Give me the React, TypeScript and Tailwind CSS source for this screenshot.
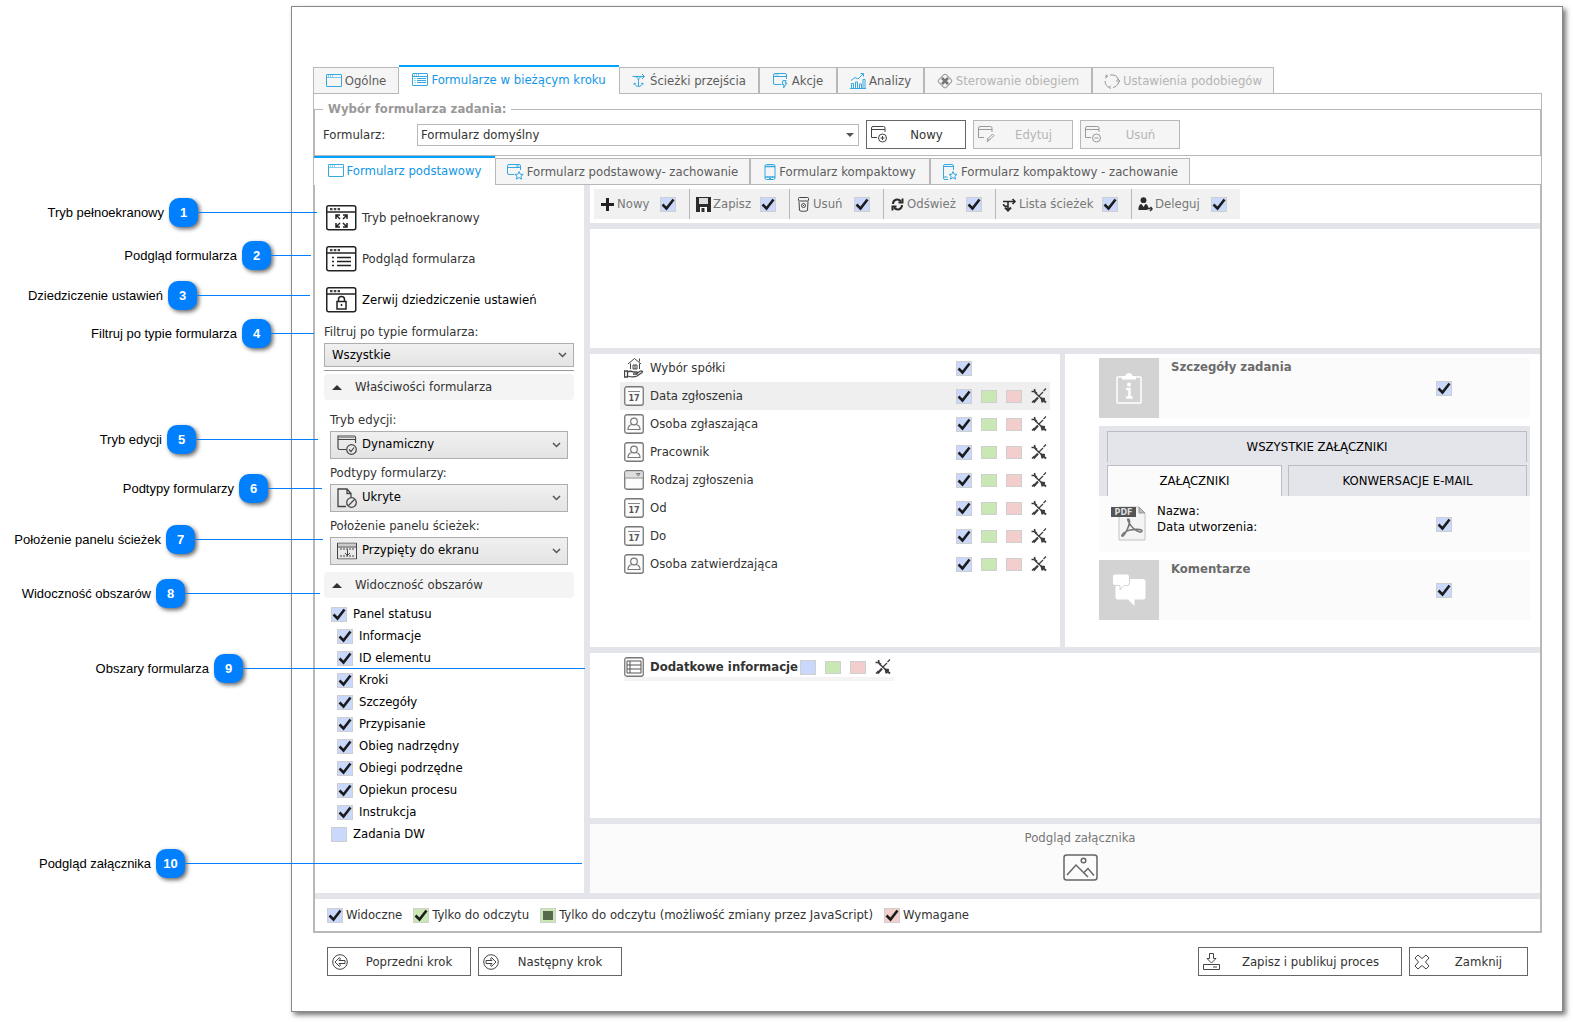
import type { ReactNode } from "react";

type IconProps = { className?: string };

interface TabItem {
  label: string;
  icon: ReactNode;
  width: string;
  active?: boolean;
  disabled?: boolean;
}

/* ---------- icons ---------- */

function WindowIcon({ className = "" }: IconProps) {
  return (
    <svg width="16" height="14" viewBox="0 0 16 14" fill="none" stroke="currentColor" className={className}>
      <rect x="0.5" y="0.5" width="15" height="12" rx="0.5" />
      <path d="M1 3.500h14" strokeOpacity="0.6" />
      <path d="M2 2h5" strokeDasharray="1 1" />
    </svg>
  );
}

function WindowListIcon() {
  return (
    <svg width="16" height="14" viewBox="0 0 16 14" fill="none" stroke="currentColor">
      <rect x="0.5" y="0.5" width="15" height="12" rx="0.5" />
      <path d="M0.5 3.5h15M5 5.500h9M5 7.500h9M5 9.500h9M2.5 5.500h1M2.5 7.500h1M2.5 9.500h1" />
      <path d="M2 2h5" strokeDasharray="1 1" />
    </svg>
  );
}

function PathsIcon() {
  return (
    <svg width="15" height="15" viewBox="0 0 15 15" fill="none" stroke="currentColor">
      <path d="M0.500 3.500h12M10 1l2.500 2.500L10 6M2 3.500c3 0 4.500 1.500 4.500 4V13M11 3.500c-3 0-4.500 1.500-4.500 4" />
      <path d="M2.500 10c0 2 2 3.500 4 3.500s4-1.500 4-3.500M1.500 11.500l1-1.500 1.500 1M11.500 11.500l-1-1.500-1.500 1" />
    </svg>
  );
}

function WindowBoltIcon() {
  return (
    <svg width="16" height="16" viewBox="0 0 16 16" fill="none" stroke="currentColor">
      <path d="M8 11.500H2A1.500 1.500 0 0 1 0.500 10V2A1.500 1.500 0 0 1 2 0.500h10A1.500 1.500 0 0 1 13.500 2v4M0.500 3.500h13" />
      <path d="M2.500 2h1M4.500 2h1" />
      <path d="M10 7.500h3l-1 2.500h2L10.500 15l.5-3.500H9z" />
    </svg>
  );
}

function ChartIcon() {
  return (
    <svg width="16" height="16" viewBox="0 0 16 16" fill="none" stroke="currentColor">
      <path d="M1.500 15v-4.500h2V15M5.500 15V9h2v6M9.500 15v-4h2v4M13 15V6.500h2V15M0 15.500h16M1 7.500l4-3 3 1.500 5-5M10.500 0.500h3v3" />
    </svg>
  );
}

function FlowControlIcon() {
  return (
    <svg width="16" height="16" viewBox="0 0 16 16" fill="none" stroke="currentColor">
      <rect x="2.700" y="2.700" width="10.600" height="10.600" rx="2" transform="rotate(45 8 8)" />
      <path d="M5 5l6 6M11 5l-6 6" stroke="#777" strokeWidth="2.600" />
    </svg>
  );
}

function CycleIcon() {
  return (
    <svg width="16" height="16" viewBox="0 0 16 16" fill="none" stroke="#999">
      <path d="M6 2h3a6 5 0 0 1 5 5M14.500 9.500C14 12 11.500 14 9 14.500M5.500 14.500C3 13.500 1 11.500 1 8M1.500 5.500L3.500 3" />
      <path d="M3.500 3L2 1.500M3.500 3L1 3.500M12 8h4M14 6l2 2-2 2.500M7 12.500l-2 2 2 1" />
    </svg>
  );
}

function WindowStarIcon() {
  return (
    <svg width="17" height="16" viewBox="0 0 17 16" fill="none" stroke="currentColor">
      <path d="M7 10.500H2A1.500 1.500 0 0 1 0.500 9V2A1.500 1.500 0 0 1 2 0.500h10A1.500 1.500 0 0 1 13.500 2v4M0.500 3.500h13M9 2h3" />
      <path d="M12 7.500l1.200 2.700 3 .2-2.300 1.800.8 3-2.700-1.600-2.700 1.600.8-3-2.300-1.800 3-.2z" />
    </svg>
  );
}

function PhoneIcon() {
  return (
    <svg width="12" height="16" viewBox="0 0 12 16" fill="none" stroke="currentColor">
      <rect x="1" y="0.500" width="10" height="15" rx="1.500" />
      <path d="M1 2.500h10M1 13h10" strokeWidth="1.400" />
      <path d="M5 14.500h2" />
    </svg>
  );
}

function PhoneStarIcon() {
  return (
    <svg width="16" height="16" viewBox="0 0 16 16" fill="none" stroke="currentColor">
      <path d="M6 15.500H3A1.500 1.500 0 0 1 1.500 14V2A1.500 1.500 0 0 1 3 0.500h7A1.500 1.500 0 0 1 11.500 2v4M1.500 2.500h10M1.500 13h4" />
      <path d="M11 7.500l1.100 2.700 2.900.2-2.200 1.800.8 3-2.600-1.600-2.600 1.600.8-3L7 10.400l2.900-.2z" />
    </svg>
  );
}

function WindowBadgeIcon({ kind }: { kind: "plus" | "edit" | "minus" }) {
  return (
    <svg width="17" height="17" viewBox="0 0 17 17" fill="none" stroke="currentColor">
      <path d="M6 11.500H0.500V2A1.500 1.500 0 0 1 2 0.500h10.500A1.500 1.500 0 0 1 14 2v4M0.500 3.500H14" />
      {kind === "edit" ? (
        <path d="M9 15.500l1-3 4.500-4.500 1.500 1.500-4.500 4.500zM10 12.500l1.500 1.500" />
      ) : (
        <>
          <circle cx="11.500" cy="12" r="4" />
          <path d={kind === "plus" ? "M9.500 12h4M11.500 10v4" : "M9.500 12h4"} />
        </>
      )}
    </svg>
  );
}

function BigWindowIcon({ children }: { children: ReactNode }) {
  return (
    <svg width="31" height="26" viewBox="0 0 31 26" fill="none" stroke="#222" className="shrink-0">
      <rect x="0.750" y="0.750" width="29" height="24" rx="2" strokeWidth="1.500" />
      <path d="M1 7h29" strokeWidth="1.500" />
      <path d="M4 4.200h10" stroke="#444" strokeWidth="2.200" strokeDasharray="2.500 1.300" />
      {children}
    </svg>
  );
}

function PlusIcon() {
  return (
    <svg width="15" height="15" viewBox="0 0 15 15" stroke="#222" strokeWidth="3">
      <path d="M7.500 1v13M1 7.500h13" />
    </svg>
  );
}

function SaveIcon() {
  return (
    <svg width="15" height="15" viewBox="0 0 15 15">
      <path fill="#2b2b2b" d="M0 0h15v15H0z" />
      <path fill="#ddd" d="M3 1h9v6H3z" />
      <path fill="#fff" d="M4 10h7v5H4z" />
      <path fill="#2b2b2b" d="M5.500 11h3v4h-3z" />
    </svg>
  );
}

function BinIcon() {
  return (
    <svg width="15" height="15" viewBox="0 0 15 15" fill="none" stroke="#444">
      <path d="M3 4.500l.5 9c.5 1 7.500 1 8 0l.5-9" />
      <rect x="2.500" y="0.500" width="10" height="3.500" rx="1" />
      <circle cx="7.500" cy="8.500" r="2" />
      <path d="M7 8.500h1" />
    </svg>
  );
}

function RefreshIcon() {
  return (
    <svg width="15" height="15" viewBox="0 0 15 15" fill="none" stroke="#2b2b2b" strokeWidth="2">
      <path d="M3 7C3 2.500 8 1 11 4.500M12 8c0 4.500-5 6-8 2.500" />
      <path d="M12.500 1.500v4h-4M2.500 13.500v-4h4" />
    </svg>
  );
}

function PathListIcon() {
  return (
    <svg width="15" height="15" viewBox="0 0 15 15" fill="none" stroke="#2b2b2b" strokeWidth="1.600">
      <path d="M1 4.500h12M10.500 2l2.500 2.500L10.500 7M6 4.500V12M1.500 7c0 2 2 2.500 4 2" />
      <path d="M3 10.500l3 3 3-3" strokeWidth="2" />
    </svg>
  );
}

function DelegateIcon() {
  return (
    <svg width="15" height="15" viewBox="0 0 15 15" fill="#2b2b2b">
      <circle cx="5.500" cy="3.200" r="2.900" />
      <path d="M0.500 13c-.3-4 1.500-6 3-6l2 3 2-3c1.500 0 3 2 3 5l-2 1z" />
      <path d="M9 11.500h3.500M12.500 10l1.500 2-2 2" stroke="#2b2b2b" strokeWidth="1.500" fill="none" />
    </svg>
  );
}

function ToolsIcon() {
  return (
    <svg width="16" height="16" viewBox="0 0 16 16" fill="none" stroke="#3c3c3c">
      <path d="M5 5.500l6 5.500" strokeWidth="1.500" />
      <path d="M0.500 3.500h3l1.500 2M3.500 1l.5 3 2 1.500" strokeWidth="1.600" />
      <path d="M10 10.500l4 .5M10.500 10l1 4.500M12 12l3 2.500" strokeWidth="2" />
      <path d="M15 0.500L12.500 3M12 4L7.500 8.500" strokeWidth="1.200" />
      <path d="M7 9.500l-4.500 5" strokeWidth="2.200" />
      <path d="M3.500 12L1 14.500" strokeWidth="1.500" />
    </svg>
  );
}

function FieldIcon({ kind }: { kind: string }) {
  if (kind === "house") {
    return (
      <svg width="20" height="20" viewBox="0 0 20 20" fill="none" stroke="#444" className="shrink-0">
        <path d="M4 6l6.500-5.500L17 6M15.500 0.500v3M6.500 5.500V11M15.500 5.500V11M9 7h4v4H9zM11 7v4" />
        <path d="M0.500 13h3v6h-3zM3.500 14c3-1.500 4-1 6 0h3c1.500 0 1.500 2 0 2H9M12.500 15.500l4-2.500c1.500-.5 2.500.5 1.500 1.500l-5 3.500c-2 1-6 1-9.500 0" strokeWidth="1.300" />
      </svg>
    );
  }
  return (
    <svg width="20" height="20" viewBox="0 0 20 20" fill="none" stroke="#777" className="shrink-0">
      <rect x="0.750" y="0.750" width="18.500" height="18.500" rx="2" strokeWidth="1.300" fill="#fcfcfc" />
      {kind === "date" && (
        <>
          <path d="M4 5.500h12" stroke="#888" />
          <text x="10" y="14.500" textAnchor="middle" fontSize="8" fontWeight="bold" fill="#555" stroke="none" fontFamily="DejaVu Sans, sans-serif">
            17
          </text>
        </>
      )}
      {kind === "person" && (
        <>
          <circle cx="10" cy="7.500" r="3.300" strokeWidth="1.200" />
          <path d="M8 10.500c-3 .5-4 2-4 5h12c0-3-1-4.500-4-5" strokeWidth="1.200" />
        </>
      )}
      {kind === "select" && (
        <>
          <path d="M1.500 1.500h17v6h-17z" fill="#ddd" stroke="none" />
          <path d="M1 8h18" stroke="#888" />
          <path d="M12.500 3.500h3.500l-1.700 2.500z" />
        </>
      )}
      {kind === "grid" && <path d="M3 4h14v12H3zM3 8h14M3 12h14M6 4v12" stroke="#555" />}
    </svg>
  );
}

/* ---------- form controls ---------- */

interface CheckProps {
  id?: string;
  label?: string;
  checked?: boolean;
  color?: "blue" | "green" | "red";
  small?: boolean;
}

const checkColors = {
  blue: "bg-[#c9d8fb]",
  green: "bg-[#c9e8b4]",
  red: "bg-[#f2cfcc]",
};

function Check({ id, label, checked = false, color = "blue", small = false }: CheckProps) {
  return (
    <span className="relative inline-flex shrink-0">
      <input
        id={id}
        type="checkbox"
        aria-label={label}
        defaultChecked={checked}
        className={`peer w-4 appearance-none border border-[#cfcfcf] ${small ? "h-[13px]" : "h-[15px]"} ${checkColors[color]}`}
      />
      <svg
        viewBox="0 0 16 15"
        className="pointer-events-none absolute inset-0 hidden h-full w-full peer-checked:block"
        fill="none"
        stroke="#1c1c1c"
        strokeWidth="2.600"
      >
        <path d="M2.500 7.500l4 4L13.500 2.500" />
      </svg>
    </span>
  );
}

function Chevron() {
  return (
    <svg width="9" height="6" viewBox="0 0 9 6" fill="none" stroke="#555" strokeWidth="1.500" className="pointer-events-none absolute right-[7px] top-1/2 -translate-y-1/2">
      <path d="M1 1l3.500 3.500L8 1" />
    </svg>
  );
}

interface IconSelectProps {
  id: string;
  label: string;
  value: string;
  icon: ReactNode;
}

function IconSelect({ id, label, value, icon }: IconSelectProps) {
  return (
    <div className="mt-[3px]">
      <label htmlFor={id} className="block leading-[22px] text-[#333]">{label}</label>
      <div className="relative h-7">
        <select id={id} className="h-full w-full appearance-none border border-[#adadad] bg-linear-to-b from-[#f0f0f0] to-[#e4e4e4] pb-0.5 pl-[31px] text-black">
          <option>{value}</option>
        </select>
        <span className="pointer-events-none absolute left-[7px] top-1/2 -translate-y-1/2">{icon}</span>
        <Chevron />
      </div>
    </div>
  );
}

function SectionHeader({ title }: { title: string }) {
  return (
    <button className="flex h-[26px] w-full items-center rounded-sm bg-[#f4f4f4] pl-2 text-[#333]">
      <svg width="10" height="5" viewBox="0 0 10 5" fill="#333">
        <path d="M0 5l5-5 5 5z" />
      </svg>
      <span className="ml-[13px]">{title}</span>
    </button>
  );
}

function TabBar({ tabs }: { tabs: TabItem[] }) {
  return (
    <div role="tablist" className="flex items-end">
      {tabs.map((tab) => (
        <button
          key={tab.label}
          role="tab"
          aria-selected={!!tab.active}
          disabled={tab.disabled}
          className={`flex items-center justify-center gap-[3px] whitespace-nowrap ${tab.width} ${
            tab.active
              ? "h-[29px] border-t-2 border-[#00a2ff] bg-white pb-0.5 text-[#1296e6]"
              : "h-[27px] border border-[#b8b8b8] bg-[#f5f5f5]"
          } ${tab.disabled ? "text-[#b4b4b4]" : ""} ${!tab.active && !tab.disabled ? "text-[#5c5c5c]" : ""}`}
        >
          <span className={tab.disabled ? "text-[#999]" : "text-[#35a8e0]"}>{tab.icon}</span>
          {tab.label}
        </button>
      ))}
      <div className="flex-1 self-end border-b border-[#b8b8b8]"></div>
    </div>
  );
}

interface ActionButtonProps {
  label: string;
  icon: ReactNode;
  width: string;
  disabled?: boolean;
}

function ActionButton({ label, icon, width, disabled }: ActionButtonProps) {
  return (
    <button
      disabled={disabled}
      className={`flex h-[29px] items-center border pl-1 ${width} ${
        disabled ? "border-[#b8b8b8] bg-[#f5f5f5] text-[#b4b4b4]" : "border-[#666] bg-white text-[#333]"
      }`}
    >
      <span className={disabled ? "text-[#999]" : "text-[#444]"}>{icon}</span>
      <span className="flex-1 text-center">{label}</span>
    </button>
  );
}

/* ---------- data ---------- */

const mainTabs: TabItem[] = [
  { label: "Ogólne", icon: <WindowIcon />, width: "w-[86px]" },
  { label: "Formularze w bieżącym kroku", icon: <WindowListIcon />, width: "w-[220px]", active: true },
  { label: "Ścieżki przejścia", icon: <PathsIcon />, width: "w-[140px]" },
  { label: "Akcje", icon: <WindowBoltIcon />, width: "w-[78px]" },
  { label: "Analizy", icon: <ChartIcon />, width: "w-[87px]" },
  { label: "Sterowanie obiegiem", icon: <FlowControlIcon />, width: "w-[168px]", disabled: true },
  { label: "Ustawienia podobiegów", icon: <CycleIcon />, width: "w-[182px]", disabled: true },
];

const formTabs: TabItem[] = [
  { label: "Formularz podstawowy", icon: <WindowIcon />, width: "w-[181px]", active: true },
  { label: "Formularz podstawowy- zachowanie", icon: <WindowStarIcon />, width: "w-[255px]" },
  { label: "Formularz kompaktowy", icon: <PhoneIcon />, width: "w-[180px]" },
  { label: "Formularz kompaktowy - zachowanie", icon: <PhoneStarIcon />, width: "w-[260px]" },
];

const toolbar = [
  { label: "Nowy", icon: <PlusIcon />, width: "w-[96px]" },
  { label: "Zapisz", icon: <SaveIcon />, width: "w-[100px]" },
  { label: "Usuń", icon: <BinIcon />, width: "w-[94px]" },
  { label: "Odśwież", icon: <RefreshIcon />, width: "w-[112px]" },
  { label: "Lista ścieżek", icon: <PathListIcon />, width: "w-[136px]" },
  { label: "Deleguj", icon: <DelegateIcon />, width: "w-[108px]" },
];

const areas = [
  { label: "Panel statusu", checked: true },
  { label: "Informacje", checked: true, nested: true },
  { label: "ID elementu", checked: true, nested: true },
  { label: "Kroki", checked: true, nested: true },
  { label: "Szczegóły", checked: true, nested: true },
  { label: "Przypisanie", checked: true, nested: true },
  { label: "Obieg nadrzędny", checked: true, nested: true },
  { label: "Obiegi podrzędne", checked: true, nested: true },
  { label: "Opiekun procesu", checked: true, nested: true },
  { label: "Instrukcja", checked: true, nested: true },
  { label: "Zadania DW", checked: false },
];

const fields = [
  { label: "Wybór spółki", kind: "house", simple: true },
  { label: "Data zgłoszenia", kind: "date", selected: true },
  { label: "Osoba zgłaszająca", kind: "person" },
  { label: "Pracownik", kind: "person" },
  { label: "Rodzaj zgłoszenia", kind: "select" },
  { label: "Od", kind: "date" },
  { label: "Do", kind: "date" },
  { label: "Osoba zatwierdzająca", kind: "person" },
];

// text = width of the right-aligned caption, line = where the leader line ends
const callouts = [
  { n: 1, label: "Tryb pełnoekranowy", top: "top-[198px]", text: "w-[164px]", line: "w-[317px]" },
  { n: 2, label: "Podgląd formularza", top: "top-[241px]", text: "w-[237px]", line: "w-[311px]" },
  { n: 3, label: "Dziedziczenie ustawień", top: "top-[281px]", text: "w-[163px]", line: "w-[310px]" },
  { n: 4, label: "Filtruj po typie formularza", top: "top-[319px]", text: "w-[237px]", line: "w-[314px]" },
  { n: 5, label: "Tryb edycji", top: "top-[425px]", text: "w-[162px]", line: "w-[318px]" },
  { n: 6, label: "Podtypy formularzy", top: "top-[474px]", text: "w-[234px]", line: "w-[322px]" },
  { n: 7, label: "Położenie panelu ścieżek", top: "top-[525px]", text: "w-[161px]", line: "w-[323px]" },
  { n: 8, label: "Widoczność obszarów", top: "top-[579px]", text: "w-[151px]", line: "w-[320px]" },
  { n: 9, label: "Obszary formularza", top: "top-[654px]", text: "w-[209px]", line: "w-[585px]" },
  { n: 10, label: "Podgląd załącznika", top: "top-[849px]", text: "w-[151px]", line: "w-[582px]" },
];

/* ---------- sections ---------- */

function Callouts() {
  return (
    <div className="pointer-events-none absolute inset-0 font-['Liberation_Sans',sans-serif] text-black">
      {callouts.map((c) => (
        <div key={c.n} className={`absolute left-0 flex h-[29px] items-center ${c.top} ${c.line}`}>
          <span className={`shrink-0 whitespace-nowrap text-right ${c.text}`}>{c.label}</span>
          <span className="ml-[5px] flex h-[29px] w-[29px] shrink-0 items-center justify-center rounded-[10px] bg-[#007fff] font-bold text-white shadow-[2px_2px_4px_rgba(0,0,0,0.6)]">
            {c.n}
          </span>
          <span className="h-px flex-1 bg-[#007fff]"></span>
        </div>
      ))}
    </div>
  );
}

function Sidebar() {
  return (
    <aside className="w-[269px] shrink-0 bg-white pl-[9px] pr-[10px] pt-3">
      <button className="flex h-[41px] w-full items-center gap-[5px] pl-0.5 text-[#333]">
        <BigWindowIcon>
          <path d="M10 14v-4h4M10 10l4 4M21 14v-4h-4M21 10l-4 4M10 18v4h4M10 22l4-4M21 18v4h-4M21 22l-4-4" strokeWidth="1.500" />
        </BigWindowIcon>
        Tryb pełnoekranowy
      </button>
      <button className="flex h-[41px] w-full items-center gap-[5px] pl-0.5 text-[#333]">
        <BigWindowIcon>
          <path d="M6 11.500h2M6 15.500h2M6 19.500h2M11 11.500h14M11 15.500h14M11 19.500h14" strokeWidth="1.700" />
        </BigWindowIcon>
        Podgląd formularza
      </button>
      <button className="flex h-[41px] w-full items-center gap-[5px] pl-0.5 text-black">
        <BigWindowIcon>
          <rect x="11" y="14.500" width="9" height="7.500" strokeWidth="1.500" />
          <path d="M12.500 14.500v-2c0-4 6-4 6 0v2M15.500 17v2" strokeWidth="1.500" />
        </BigWindowIcon>
        Zerwij dziedziczenie ustawień
      </button>

      <label htmlFor="type-filter" className="block leading-[23px] text-[#333]">Filtruj po typie formularza:</label>
      <div className="relative h-6">
        <select id="type-filter" className="h-full w-full appearance-none border border-[#adadad] bg-linear-to-b from-[#f0f0f0] to-[#e4e4e4] pl-[7px] text-black">
          <option>Wszystkie</option>
        </select>
        <Chevron />
      </div>

      <div className="mt-[3px] border-t border-[#999] pt-[3px]">
        <SectionHeader title="Właściwości formularza" />
        <div className="px-[6px] pt-[6px]">
          <IconSelect
            id="edit-mode"
            label="Tryb edycji:"
            value="Dynamiczny"
            icon={
              <svg width="20" height="20" viewBox="0 0 20 20" fill="none" stroke="#444" strokeWidth="1.200">
                <path d="M9 14.500H2.500A1.500 1.500 0 0 1 1 13V1h16a1.500 1.500 0 0 1 1.500 1.500V8M1 4.500h17" />
                <path d="M2 2.500h15" stroke="#999" />
                <circle cx="14.500" cy="14.500" r="4.800" fill="#e9e9e9" />
                <path d="M12 14.500l2 2 3-4" />
              </svg>
            }
          />
          <IconSelect
            id="subtypes"
            label="Podtypy formularzy:"
            value="Ukryte"
            icon={
              <svg width="20" height="20" viewBox="0 0 20 20" fill="none" stroke="#444" strokeWidth="1.300">
                <path d="M9 18.500H1V1h9l4 4.500V9M10 1v4.500h4" />
                <circle cx="14.500" cy="14.500" r="4.800" fill="#e9e9e9" />
                <path d="M11.500 17.500l6-6" />
              </svg>
            }
          />
          <IconSelect
            id="paths-panel"
            label="Położenie panelu ścieżek:"
            value="Przypięty do ekranu"
            icon={
              <svg width="20" height="17" viewBox="0 0 20 17" fill="none" stroke="#444">
                <path d="M0.500 0.500h19v16h-19zM0.500 4.500h19M10.500 7v6" />
                <path d="M1 2.500h18" stroke="#aaa" />
                <path d="M3 6.500h14M3 13.500h14" strokeDasharray="2 1" />
                <path d="M8 10.500l2.500 2.500 2.500-2.500" />
              </svg>
            }
          />
        </div>
        <div className="mt-[7px]">
          <SectionHeader title="Widoczność obszarów" />
        </div>
        <ul className="mt-[5px]">
          {areas.map((area, index) => (
            <li key={area.label} className={`flex h-[22px] items-center ${area.nested ? "pl-[13px]" : "pl-[7px]"}`}>
              <Check id={`area-${index}`} checked={area.checked} />
              <label htmlFor={`area-${index}`} className="pl-[6px] text-black">{area.label}</label>
            </li>
          ))}
        </ul>
      </div>
    </aside>
  );
}

function Toolbar() {
  return (
    <div className="bg-white p-1">
      <div className="flex w-fit bg-[#f1f1f1]">
        {toolbar.map((item, index) => (
          <div
            key={item.label}
            className={`flex h-[30px] items-center justify-between pl-[6px] pr-[13px] ${item.width} ${
              index < toolbar.length - 1 ? "border-r border-[#b8b8b8]" : ""
            }`}
          >
            <button className="flex items-center gap-[2px] whitespace-nowrap text-[#777]">
              {item.icon}
              {item.label}
            </button>
            <Check label={item.label} checked />
          </div>
        ))}
      </div>
    </div>
  );
}

function FieldList() {
  return (
    <ul className="min-h-[293px] w-[470px] bg-white pl-[30px] pr-[10px] text-[#333]">
      {fields.map((field) => (
        <li key={field.label} className={`flex h-7 items-center pl-1 ${field.selected ? "bg-[#efefef]" : ""}`}>
          <FieldIcon kind={field.kind} />
          <span className="flex-1 pl-[6px]">{field.label}</span>
          <span className="flex w-[94px] items-center gap-[9px]">
            <Check label={`${field.label} - widoczne`} checked />
            {!field.simple && (
              <>
                <Check label={`${field.label} - tylko do odczytu`} color="green" small />
                <Check label={`${field.label} - wymagane`} color="red" small />
                <button aria-label="Ustawienia pola">
                  <ToolsIcon />
                </button>
              </>
            )}
          </span>
        </li>
      ))}
    </ul>
  );
}

function DetailCard({ title, icon }: { title: string; icon: ReactNode }) {
  return (
    <section className="flex h-[60px] bg-[#fbfbfb]">
      <div className="flex w-[60px] items-center justify-center bg-[#d3d3d3]">{icon}</div>
      <h3 className="flex-1 pl-3 font-bold leading-[17px] text-[#6b6b6b]">{title}</h3>
      <div className="flex items-center pr-[78px]">
        <Check label={title} checked />
      </div>
    </section>
  );
}

function Details() {
  return (
    <div className="flex flex-1 flex-col gap-2 bg-white pl-[34px] pr-[10px] pt-1">
      <DetailCard
        title="Szczegóły zadania"
        icon={
          <svg width="26" height="32" viewBox="0 0 26 32" fill="none" stroke="#fff" strokeWidth="1.500">
            <rect x="1" y="5" width="24" height="26" rx="1" />
            <path d="M6 7.500V4h3.500c.5-4 6.500-4 7 0H20v3.500z" fill="#fff" stroke="none" />
            <circle cx="13" cy="12.500" r="2" fill="#fff" stroke="none" />
            <path d="M10 17h3.500v8M10 25.500h6.500" strokeWidth="2.500" />
          </svg>
        }
      />
      <section className="bg-[#fbfbfb]">
        <div role="tablist" className="flex flex-wrap gap-x-[6px] gap-y-[3px] bg-[#e4e5ea] pl-2 pr-[3px] pt-[5px] text-black">
          <button role="tab" className="h-[31px] w-full border border-b-0 border-[#bcbdc2]">WSZYSTKIE ZAŁĄCZNIKI</button>
          <button role="tab" aria-selected="true" className="h-[31px] w-[175px] border border-b-0 border-[#bcbdc2] bg-[#fbfbfb]">
            ZAŁĄCZNIKI
          </button>
          <button role="tab" className="h-[31px] flex-1 border border-b-0 border-[#bcbdc2]">KONWERSACJE E-MAIL</button>
        </div>
        <div className="flex h-14 items-center pl-3 pr-[78px] text-black">
          <svg width="35" height="36" viewBox="0 0 35 36" fill="none">
            <path d="M8 1h20l6 6v27H8z" fill="#f4f4f4" stroke="#c4c4c4" />
            <path d="M28 1v6h6z" fill="#bbb" stroke="#999" />
            <path d="M0 1h25v10H0z" fill="#555" />
            <text x="12.500" y="9" textAnchor="middle" fontSize="8" fontWeight="bold" fill="#ddd" fontFamily="DejaVu Sans, sans-serif">
              PDF
            </text>
            <path d="M17 13c3 0 1 7-1 11s-4 7-5 6 3-5 8-6 12-1 12 1-5 1-9-3-6-9-5-9z" stroke="#777" strokeWidth="1.600" />
          </svg>
          <div className="flex-1 self-start pl-[11px] pt-[7px] leading-4">
            <p>Nazwa:</p>
            <p>Data utworzenia:</p>
          </div>
          <Check label="Załączniki" checked />
        </div>
      </section>
      <DetailCard
        title="Komentarze"
        icon={
          <svg width="34" height="34" viewBox="0 0 34 34" fill="#fff">
            <path d="M6 6h25a2.500 2.500 0 0 1 2.500 2.500V24a2.500 2.500 0 0 1-2.500 2.500h-8.500V33L16 26.500H6A2.500 2.500 0 0 1 3.500 24V8z" />
            <path
              d="M3 1h12a2.500 2.500 0 0 1 2.500 2.500V10a2.500 2.500 0 0 1-2.500 2.500h-3L8 17v-4.500H3A2.500 2.500 0 0 1 .5 10V3.500A2.500 2.500 0 0 1 3 1z"
              stroke="#d3d3d3"
            />
          </svg>
        }
      />
    </div>
  );
}

function Legend() {
  return (
    <div className="flex h-8 items-center gap-[11px] bg-white pl-3 text-[#333]">
      <label className="flex items-center gap-[3px]">
        <Check checked />
        Widoczne
      </label>
      <label className="flex items-center gap-[3px]">
        <Check color="green" checked />
        Tylko do odczytu
      </label>
      <label className="flex items-center gap-[3px]">
        <span className="relative inline-flex">
          <Check color="green" />
          <span className="pointer-events-none absolute inset-[3px] bg-[#566b4c]"></span>
        </span>
        Tylko do odczytu (możliwość zmiany przez JavaScript)
      </label>
      <label className="flex items-center gap-[3px]">
        <Check color="red" checked />
        Wymagane
      </label>
    </div>
  );
}

export default function App() {
  return (
    <div className="relative flex min-h-screen bg-white pb-[10px] pl-[291px] pr-[10px] pt-[6px] font-['DejaVu_Sans_Condensed','Noto_Sans',sans-serif] text-[13px] leading-4">
      <main className="min-w-0 flex-1 border border-[#888] bg-white pb-[35px] pl-[21px] pr-5 pt-[58px] shadow-[3px_3px_5px_#777]">
        <TabBar tabs={mainTabs} />

        <div className="border border-t-0 border-[#b8b8b8] pt-[5px]">
          <fieldset className="border border-[#b8b8b8] pb-[6px] pl-2 pt-px">
            <legend className="px-[5px] font-bold leading-5 text-[#999]">Wybór formularza zadania:</legend>
            <div className="flex items-center gap-[7px]">
              <label htmlFor="form" className="w-[87px] text-[#333]">Formularz:</label>
              <div className="relative h-[22px] w-[442px]">
                <select id="form" className="h-full w-full appearance-none border border-[#b8b8b8] bg-white pl-[3px] text-[#333]">
                  <option>Formularz domyślny</option>
                </select>
                <svg width="8" height="4" viewBox="0 0 8 4" fill="#555" className="pointer-events-none absolute right-[5px] top-[9px]">
                  <path d="M0 0h8L4 4z" />
                </svg>
              </div>
              <ActionButton label="Nowy" icon={<WindowBadgeIcon kind="plus" />} width="w-[100px]" />
              <ActionButton label="Edytuj" icon={<WindowBadgeIcon kind="edit" />} width="w-[100px]" disabled />
              <ActionButton label="Usuń" icon={<WindowBadgeIcon kind="minus" />} width="w-[100px]" disabled />
            </div>
          </fieldset>

          <TabBar tabs={formTabs} />

          <div className="flex flex-col gap-[6px] border border-t-0 border-[#b8b8b8] bg-[#e4e5ea]">
            <div className="flex gap-[6px]">
              <Sidebar />
              <div className="flex min-w-0 flex-1 flex-col gap-[6px]">
                <Toolbar />
                <div className="h-[119px] bg-white"></div>
                <div className="flex gap-[5px]">
                  <FieldList />
                  <Details />
                </div>
                <div className="h-[165px] bg-white pl-[34px] pt-1">
                  <div className="flex w-fit items-center border-b-4 border-[#f4f4f4] pr-[3px] text-[#333]">
                    <FieldIcon kind="grid" />
                    <span className="w-[156px] pl-[6px] font-bold">Dodatkowe informacje</span>
                    <span className="flex items-center gap-[9px]">
                      <Check label="Dodatkowe informacje - widoczne" />
                      <Check label="Dodatkowe informacje - tylko do odczytu" color="green" small />
                      <Check label="Dodatkowe informacje - wymagane" color="red" small />
                      <button aria-label="Ustawienia pola">
                        <ToolsIcon />
                      </button>
                    </span>
                  </div>
                </div>
                <div className="flex h-[69px] flex-col items-center bg-[#fbfbfb] pl-[30px] pt-1 text-[#777]">
                  <p className="leading-5">Podgląd załącznika</p>
                  <svg width="35" height="27" viewBox="0 0 35 27" fill="none" stroke="#666" strokeWidth="1.500" className="mt-[6px]">
                    <rect x="1" y="1" width="33" height="25" rx="2.500" />
                    <path d="M4 21l9-10 12 12M21 18.500l4-4 6 7" />
                    <circle cx="20.500" cy="6.500" r="2.300" />
                  </svg>
                </div>
              </div>
            </div>
            <Legend />
          </div>
        </div>

        <div className="flex gap-[7px] px-[14px] pt-[14px]">
          <ActionButton
            label="Poprzedni krok"
            width="w-[144px]"
            icon={
              <svg width="16" height="16" viewBox="0 0 16 16" fill="none" stroke="currentColor">
                <circle cx="8" cy="8" r="7.300" />
                <path d="M3 8l4.500-4.500 1 1.500-1.500 1.500h6v3H7L8.500 11l-1 1.500z" />
              </svg>
            }
          />
          <ActionButton
            label="Następny krok"
            width="w-[144px]"
            icon={
              <svg width="16" height="16" viewBox="0 0 16 16" fill="none" stroke="currentColor">
                <circle cx="8" cy="8" r="7.300" />
                <path d="M13 8L8.500 3.500l-1 1.500L9 6.500H3v3h6L7.500 11l1 1.500z" />
              </svg>
            }
          />
          <div className="flex-1"></div>
          <ActionButton
            label="Zapisz i publikuj proces"
            width="w-[204px]"
            icon={
              <svg width="17" height="17" viewBox="0 0 17 17" fill="none" stroke="currentColor">
                <path d="M6.500 0.500h4v5h2.500L8.500 10 4 5.500h2.500zM0.500 11.500h16v5h-16zM10 14h4" />
              </svg>
            }
          />
          <ActionButton
            label="Zamknij"
            width="w-[119px]"
            icon={
              <svg width="16" height="16" viewBox="0 0 16 16" fill="none" stroke="currentColor">
                <path d="M4 1l4 3.500L12 1l3 3-3.500 4 3.500 4-3 3-4-3.500L4 15l-3-3 3.500-4L1 4z" strokeLinejoin="round" />
              </svg>
            }
          />
        </div>
      </main>
      <Callouts />
    </div>
  );
}
